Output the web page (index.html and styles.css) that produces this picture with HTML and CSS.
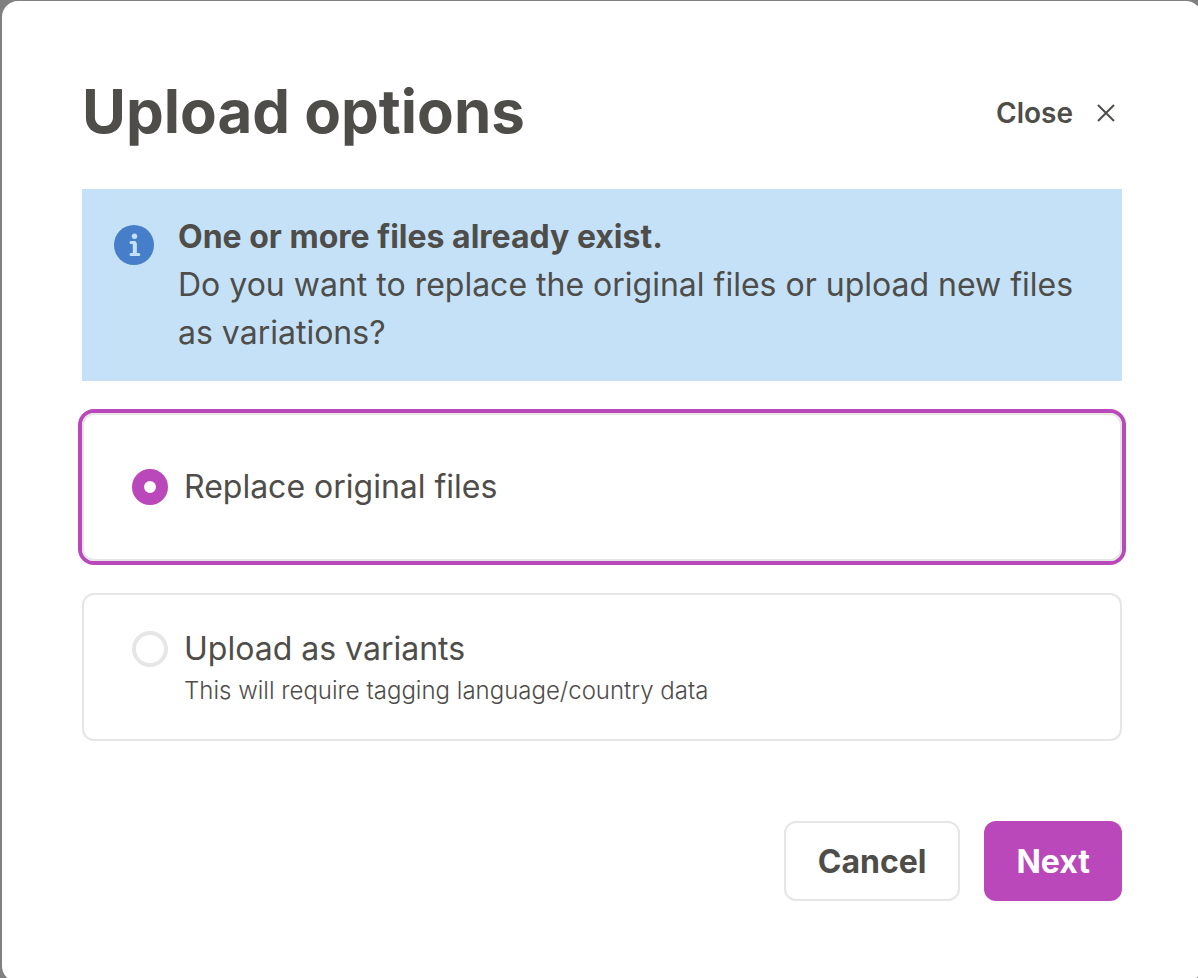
FILE: index.html
```html
<!DOCTYPE html>
<html lang="en">
<head>
<meta charset="utf-8">
<meta name="viewport" content="width=device-width, initial-scale=1">
<title>Upload options</title>
<link rel="stylesheet" href="styles.css">
</head>
<body>
<div class="backdrop">
<main class="dialog" role="dialog" aria-labelledby="dialog-title">
  <header class="dialog-header">
    <h1 class="dialog-title" id="dialog-title">Upload options</h1>
    <button class="close" type="button">Close
      <svg class="close-icon" viewBox="0 0 18 18" aria-hidden="true"><path d="M1 1 17 17M17 1 1 17"/></svg>
    </button>
  </header>
  <section class="notice">
    <svg class="notice-icon" viewBox="0 0 40 40" aria-hidden="true">
      <circle cx="20" cy="20" r="20" fill="#477ec9"/>
      <circle cx="20.500" cy="11.200" r="2.700" fill="#c5e1f7"/>
      <path d="M17 17.500H20.800V29.500M17 29.500H24.800" fill="none" stroke="#c5e1f7" stroke-width="3" stroke-linecap="round" stroke-linejoin="round"/>
      <path d="M20.800 18V29" stroke="#c5e1f7" stroke-width="4"/>
    </svg>
    <p class="notice-text"><strong>One or more files already exist.</strong><br>Do you want to replace the original files or upload new files as variations?</p>
  </section>
  <form class="options">
    <label class="option">
      <input class="radio" type="radio" name="mode" checked>
      <span class="option-text"><span class="option-label">Replace original files</span></span>
    </label>
    <label class="option">
      <input class="radio" type="radio" name="mode">
      <span class="option-text"><span class="option-label">Upload as variants</span><span class="option-hint">This will require tagging language/country data</span></span>
    </label>
    <footer class="actions">
      <button class="button" type="button">Cancel</button>
      <button class="button button-primary" type="submit">Next</button>
    </footer>
  </form>
</main>
</div>
</body>
</html>
```
FILE: styles.css
```css
* { box-sizing: border-box; }
body {
  margin: 0;
  color: #4e4d49;
  font-family: Inter, "Liberation Sans", sans-serif;
}
button { font: inherit; color: inherit; cursor: pointer; }
.backdrop {
  display: flex;
  min-height: 100vh;
  padding: 1px 0 0 2px;
  overflow: hidden;
  background: #808080;
}
/* The panel's far corners run slightly past the window edge. */
.dialog {
  flex: 1;
  margin: 0 -4px -4px 0;
  padding: 76px 80px 80px;
  background: #fff;
  border-radius: 16px;
}
.dialog-header {
  display: flex;
  align-items: center;
  justify-content: space-between;
  margin-bottom: 40px;
}
.dialog-title {
  margin: 0;
  padding-bottom: 4px;
  font-size: 60px;
  line-height: 68px;
  font-weight: 700;
}
.close {
  display: flex;
  align-items: center;
  gap: 24px;
  padding: 0 7px 0 0;
  border: 0;
  background: none;
  font-size: 28px;
  line-height: 40px;
  font-weight: 600;
}
.close-icon { width: 18px; height: 18px; fill: none; stroke: currentColor; stroke-width: 2; }
.notice {
  display: flex;
  gap: 24px;
  padding: 24px 32px;
  background: #c5e1f7;
}
.notice-icon { flex: none; width: 40px; height: 40px; margin-top: 12px; }
.notice-text { margin: 0; font-size: 32px; line-height: 48px; }
.options { display: flex; flex-direction: column; margin-top: 32px; }
.option {
  display: flex;
  align-items: center;
  gap: 16px;
  min-height: 148px;
  margin-bottom: 32px;
  padding: 30px 48px;
  border: 2px solid #e6e6e6;
  border-radius: 12px;
}
.option:has(:checked) { box-shadow: 0 0 0 4px #ba48ba; }
.radio {
  appearance: none;
  flex: none;
  width: 36px;
  height: 36px;
  margin: 0;
  border: 4px solid #e6e6e6;
  border-radius: 50%;
  background: #fff;
}
.radio:checked { border: 12px solid #ba48ba; }
.option:has(.option-hint) { align-items: flex-start; }
.option:has(.option-hint) .radio { margin-top: 6px; }
.option-text { display: flex; flex-direction: column; }
.option-label { font-size: 32px; line-height: 48px; }
.option-hint { font-size: 24px; line-height: 36px; font-weight: 300; }
.actions { display: flex; justify-content: flex-end; gap: 24px; margin-top: 48px; }
.button {
  height: 80px;
  padding: 0 32px;
  border: 2px solid #e6e6e6;
  border-radius: 12px;
  background: #fff;
  font-size: 32px;
  font-weight: 700;
}
.button-primary { border: 0; background: #ba48ba; color: #fff; }
```
